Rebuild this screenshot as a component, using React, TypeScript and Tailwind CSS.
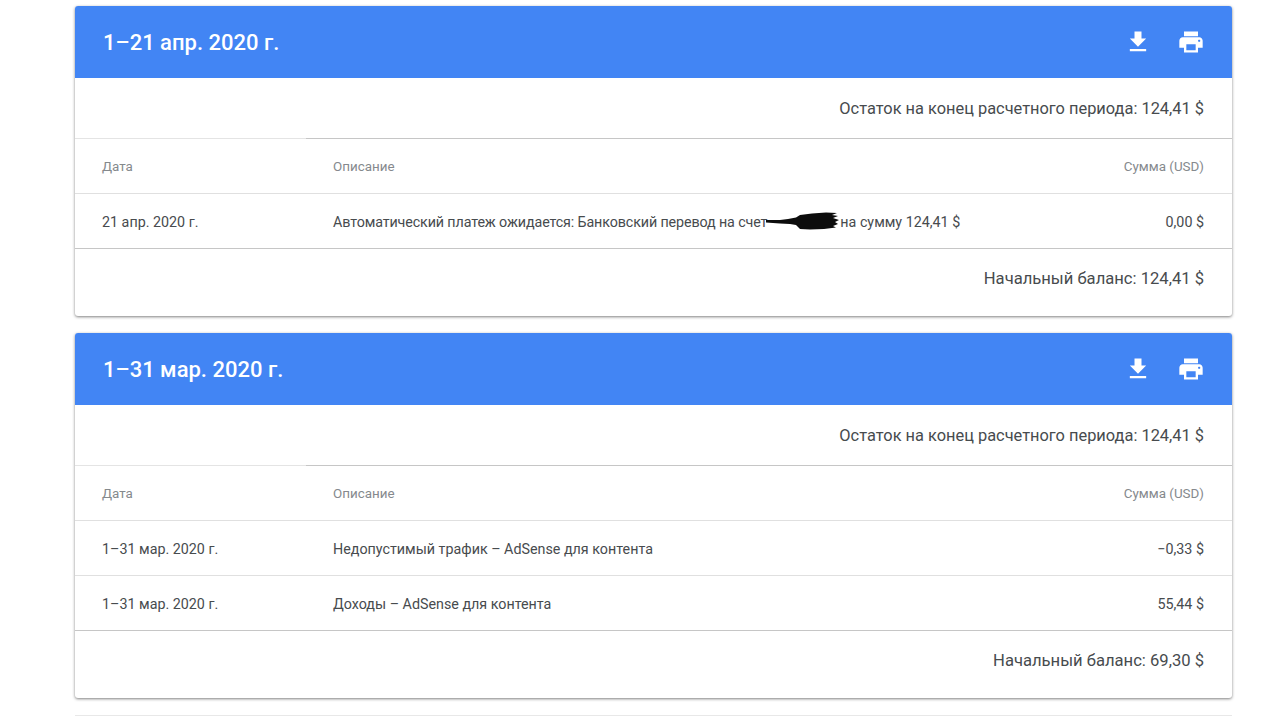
type Row = { date: string; desc: React.ReactNode; amount: string };

function DownloadIcon() {
  return (
    <svg viewBox="0 0 24 24" className="w-7 h-7 fill-white">
      <path d="M19 9h-4V3H9v6H5l7 7 7-7zM5 18v2h14v-2H5z" />
    </svg>
  );
}

function PrintIcon() {
  return (
    <svg viewBox="0 0 24 24" className="w-7 h-7 fill-white">
      <path d="M19 8H5c-1.66 0-3 1.34-3 3v6h4v4h12v-4h4v-6c0-1.66-1.34-3-3-3zm-3 11H8v-5h8v5zm3-7c-.55 0-1-.45-1-1s.45-1 1-1 1 .45 1 1-.45 1-1 1zm-1-9H6v4h12V3z" />
    </svg>
  );
}

function Scribble() {
  return (
    <svg viewBox="0 0 76 18" className="absolute left-[-1px] top-0 w-[76px] h-[18px]">
      <path
        d="M0 8 L14 8 L22 7 L30 5.5 L34 3 L46 1.5 L60 0.5 L71 1 L66 3 L72 4 L67 6 L73 8 L69 10 L72 12 L67 14 L70 15.5 L58 17 L44 17.5 L34 17 L30 13 L24 12 L14 11.5 L0 10.5 Z"
        fill="#0c0c0c"
      />
    </svg>
  );
}

function Card(props: { title: string; balance: string; start: string; rows: Row[] }) {
  return (
    <div className="bg-white rounded-[3px] overflow-hidden shadow-[0_1px_3px_rgba(0,0,0,0.5)]">
      <div className="h-[72px] bg-[#4285f4] flex items-center justify-between pl-[28px] pr-[27px]">
        <h2 className="text-[22px] font-medium text-white">{props.title}</h2>
        <div className="flex items-center gap-[25px]">
          <DownloadIcon />
          <PrintIcon />
        </div>
      </div>
      <div className="h-[60px] flex items-center justify-end pr-[28px] pt-[2px] text-[16.4px] text-[#474b4e]">
        Остаток на конец расчетного периода: {props.balance}
      </div>
      <div className="flex h-px">
        <div className="w-[231px] bg-[#e4e4e4]"></div>
        <div className="flex-1 bg-[#c6c6c6]"></div>
      </div>
      <div className="h-[54px] flex items-center pl-[27px] pr-[28px] pt-[2px] text-[13.4px] text-[#85898d]">
        <div className="w-[231px]">Дата</div>
        <div className="flex-1">Описание</div>
        <div>Сумма (USD)</div>
      </div>
      {props.rows.map((row) => (
        <div key={row.date + row.amount} className="h-[55px] border-t border-[#e0e0e0] flex items-center pl-[27px] pr-[28px] pt-[3px] text-[14.3px] text-[#474b4e]">
          <div className="w-[231px]">{row.date}</div>
          <div className="flex-1">{row.desc}</div>
          <div>{row.amount}</div>
        </div>
      ))}
      <div className="h-[69px] border-t border-[#c6c6c6] flex items-center justify-end pr-[28px] pb-[8px] text-[16.6px] text-[#474b4e]">
        Начальный баланс: {props.start}
      </div>
    </div>
  );
}

export default function App() {
  return (
    <div className="h-[716px] overflow-hidden bg-white font-['Roboto',sans-serif] pl-[75px] pr-[48px] pt-[6px] flex flex-col gap-[17px]">
      <Card
        title="1–21 апр. 2020 г."
        balance="124,41 $"
        start="124,41 $"
        rows={[
          {
            date: "21 апр. 2020 г.",
            desc: (
              <span className="inline-flex">
                <span className="tracking-[-0.12px]">Автоматический платеж ожидается: Банковский перевод на счет</span>
                <span className="relative w-[73px] h-[18px] shrink-0"><Scribble /></span>
                на сумму 124,41 $
              </span>
            ),
            amount: "0,00 $",
          },
        ]}
      />
      <Card
        title="1–31 мар. 2020 г."
        balance="124,41 $"
        start="69,30 $"
        rows={[
          { date: "1–31 мар. 2020 г.", desc: "Недопустимый трафик – AdSense для контента", amount: "−0,33 $" },
          { date: "1–31 мар. 2020 г.", desc: "Доходы – AdSense для контента", amount: "55,44 $" },
        ]}
      />
      <div className="h-px bg-[#e8e8e8] shrink-0"></div>
    </div>
  );
}
